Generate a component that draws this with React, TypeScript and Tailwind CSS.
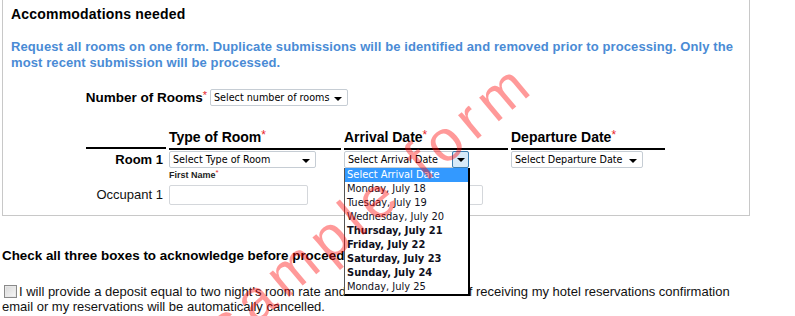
import React from "react";

const Req: React.FC<{ size?: string }> = ({ size = "text-[11px]" }) => (
  <span className={`${size} text-[#e8262c] relative -top-[3px] font-normal`}>*</span>
);

interface SelectProps {
  text: string;
  width: string;
  active?: boolean;
}

const FakeSelect: React.FC<SelectProps> = ({ text, width, active }) => (
  <div
    className={`${width} h-[17px] flex items-center justify-between gap-[3px] bg-white border border-[#c6cdd4] rounded-[2px] font-['DejaVu_Sans_Condensed','Liberation_Sans',sans-serif] text-[10.7px] leading-[14px] text-black`}
  >
    <span className="pl-[3px] whitespace-nowrap">{text}</span>
    {active ? (
      <span className="shrink-0 h-[17px] w-[17px] -mr-px -my-px flex items-center justify-center border border-[#3c7fb1] bg-[#d6eaf8] rounded-[2px]">
        <span className="block w-0 h-0 border-x-[4px] border-x-transparent border-t-[4px] border-t-black" />
      </span>
    ) : (
      <span className="shrink-0 mr-[5px] mt-[2px] block w-0 h-0 border-x-[4px] border-x-transparent border-t-[4px] border-t-black" />
    )}
  </div>
);

const dates: { label: string; bold?: boolean; selected?: boolean }[] = [
  { label: "Select Arrival Date", selected: true },
  { label: "Monday, July 18" },
  { label: "Tuesday, July 19" },
  { label: "Wednesday, July 20" },
  { label: "Thursday, July 21", bold: true },
  { label: "Friday, July 22", bold: true },
  { label: "Saturday, July 23", bold: true },
  { label: "Sunday, July 24", bold: true },
  { label: "Monday, July 25" },
];

const cols = "grid grid-cols-[80px_172px_164px_154px] gap-x-[3px] ml-[75px]";

const App: React.FC = () => {
  return (
    <div className="relative w-[795px] h-[316px] overflow-hidden bg-white text-black font-['Liberation_Sans',Arial,sans-serif]">
      {/* form box, top edge is cut off above */}
      <div className="ml-[2px] w-[748px] h-[216px] border-x border-b border-[#c8c8c8] pl-[8px] pt-[6px]">
        <h2 className="text-[14px] leading-[16px] font-bold tracking-[0.2px]">Accommodations needed</h2>
        <p className="mt-[17px] text-[13px] leading-[16px] font-bold tracking-[0.1px] text-[#4a8bd5]">
          Request all rooms on one form. Duplicate submissions will be identified and removed prior to processing. Only the
          most recent submission will be processed.
        </p>

        <div className="mt-[18px] flex items-center">
          <div className="w-[196px] text-right text-[13.5px] leading-[16px] font-bold whitespace-nowrap">
            Number of Rooms<Req />
          </div>
          <div className="ml-[3px]">
            <FakeSelect text="Select number of rooms" width="w-[138px]" />
          </div>
        </div>

        {/* room table */}
        <div className={`${cols} mt-[23px]`}>
          <div className="border-b-2 border-black pb-[2px] h-[20px]" />
          <div className="border-b-2 border-black pb-[2px] text-[14px] leading-[16px] font-bold whitespace-nowrap">
            Type of Room<Req size="text-[12px]" />
          </div>
          <div className="border-b-2 border-black pb-[2px] text-[14px] leading-[16px] font-bold whitespace-nowrap">
            Arrival Date<Req size="text-[12px]" />
          </div>
          <div className="border-b-2 border-black pb-[2px] text-[14px] leading-[16px] font-bold whitespace-nowrap">
            Departure Date<Req size="text-[12px]" />
          </div>
        </div>

        <div className={`${cols} mt-[1px] items-center`}>
          <div className="text-right pr-[3px] text-[13px] leading-[15px] font-bold">Room 1</div>
          <FakeSelect text="Select Type of Room" width="w-[147px]" />
          <div className="relative z-10">
            <FakeSelect text="Select Arrival Date" width="w-[125px]" active />
            <ul className="absolute left-0 top-full w-[126px] bg-white border-l border-[#555] border-r-2 border-b-2 border-r-black border-b-black font-['DejaVu_Sans_Condensed','Liberation_Sans',sans-serif] text-[11px]">
              {dates.map((d) => (
                <li
                  key={d.label}
                  className={`h-[14px] leading-[14px] pl-[2px] whitespace-nowrap ${d.selected ? "bg-[#3399ff] text-white" : "text-[#101020]"} ${d.bold ? "font-bold" : ""}`}
                >
                  {d.label}
                </li>
              ))}
            </ul>
          </div>
          <FakeSelect text="Select Departure Date" width="w-[132px]" />
        </div>

        <div className={`${cols} mt-[2px]`}>
          <div />
          <div className="text-[9px] leading-[10px] font-bold text-[#222]">
            First Name<Req size="text-[8px]" />
          </div>
        </div>

        <div className={`${cols} mt-[4px] items-center`}>
          <div className="text-right pr-[3px] text-[13px] leading-[16px] text-[#111]">Occupant 1</div>
          <div className="w-[139px] h-[20px] border border-[#d4d7db] rounded-[2px] bg-white" />
          <div className="w-[139px] h-[20px] border border-[#d4d7db] rounded-[2px] bg-white" />
        </div>
      </div>

      <h3 className="mt-[32px] ml-[2px] text-[13.4px] leading-[16px] font-bold whitespace-nowrap">
        Check all three boxes to acknowledge before proceeding.
      </h3>

      <p className="mt-[20px] ml-[4px] text-[13px] leading-[15px] text-[#111] whitespace-nowrap">
        <span className="inline-block align-[-2px] mr-[2px] w-[13px] h-[13px] border border-[#8a8a8a] bg-gradient-to-br from-[#d8d8d8] to-[#f8f8f8] shadow-[inset_0_0_0_1px_#e8e8e8]" />
        I will provide a deposit equal to two night's room rate and tax within 72 hours of receiving my hotel reservations confirmation
        <br />
        <span className="-ml-[2px]">email or my reservations will be automatically cancelled.</span>
      </p>

      {/* watermark */}
      <div className="pointer-events-none absolute left-[370px] top-[203px] -translate-x-1/2 -translate-y-1/2 -rotate-[40deg] whitespace-nowrap text-[58px] leading-none tracking-[8px] text-[#ff0000]/40 z-20">
        sample form
      </div>
    </div>
  );
};

export default App;
